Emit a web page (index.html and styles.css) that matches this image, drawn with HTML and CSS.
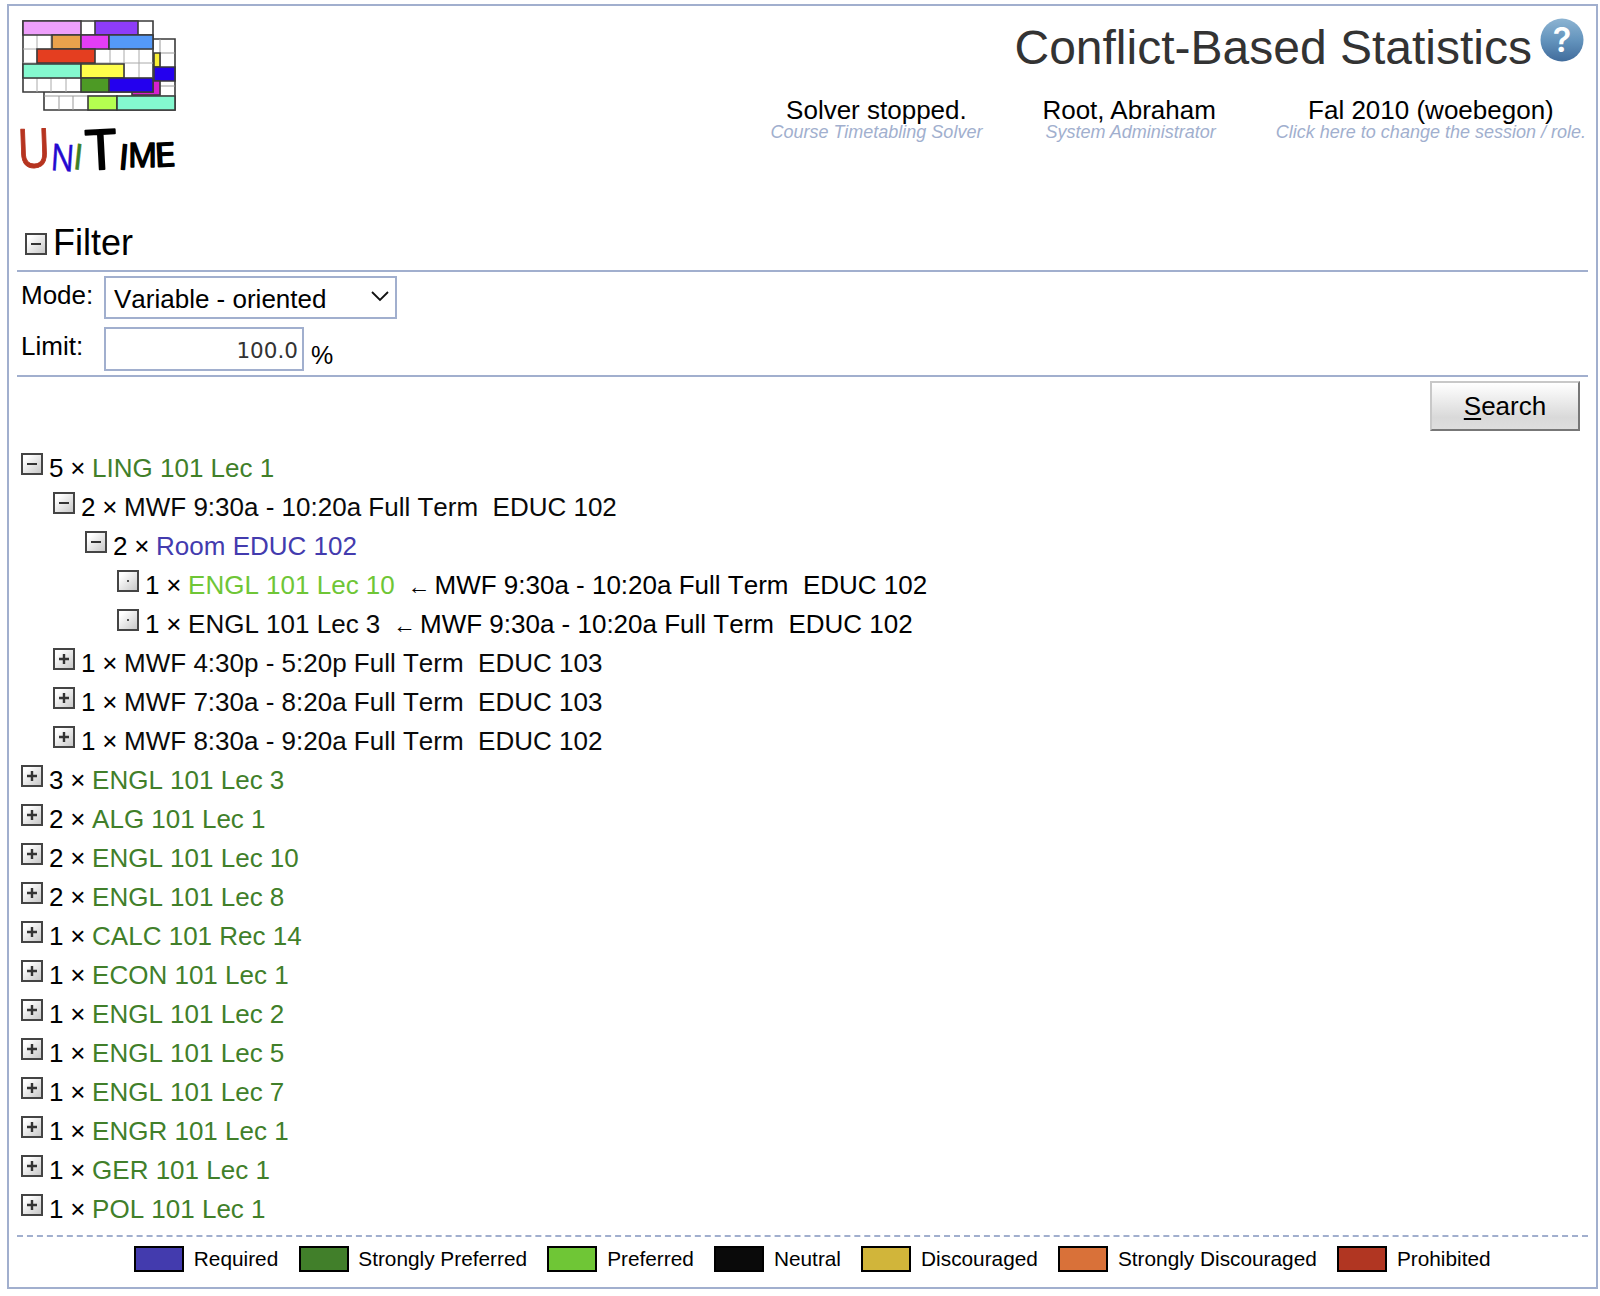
FILE: index.html
```html
<!DOCTYPE html>
<html lang="en">
<head>
<meta charset="utf-8">
<title>Conflict-Based Statistics</title>
<link rel="stylesheet" href="styles.css">
<script src="page.js" defer></script>
</head>
<body>
<svg width="0" height="0" class="defs" aria-hidden="true">
  <defs>
    <linearGradient id="box" x1="0" y1="0" x2="1" y2="1"><stop offset="0.2" stop-color="#fff"/><stop offset="1" stop-color="#c4c4c4"/></linearGradient>
    <linearGradient id="ball" x1="0" y1="0" x2="0" y2="1"><stop offset="0" stop-color="#8db4d2"/><stop offset="0.5" stop-color="#6494bd"/><stop offset="1" stop-color="#416c9c"/></linearGradient>
    <symbol id="frame" viewBox="0 0 22 22"><rect x="1" y="1" width="20" height="20" fill="url(#box)" stroke="#444" stroke-width="2"/></symbol>
    <symbol id="minus" viewBox="0 0 22 22"><use href="#frame"/><path d="M6 11h10" stroke="#333" stroke-width="2"/></symbol>
    <symbol id="plus" viewBox="0 0 22 22"><use href="#frame"/><path d="M6 11h10M11 6v10" stroke="#333" stroke-width="2.4"/></symbol>
    <symbol id="dot" viewBox="0 0 22 22"><use href="#frame"/><path d="M10 11h2" stroke="#555" stroke-width="2"/></symbol>
  </defs>
</svg>
<div class="page">
  <header class="header">
    <svg class="logo" viewBox="0 0 170 180" width="170" height="180">
      <g class="grid" transform="translate(1 1)">
        <path d="M23 20h131v71H23z" fill="#fff"/>
        <path d="M139 20v56M139 34h15M139 67h15M23 77h131M38 77v14M52 77v14" stroke="#999" stroke-width="1"/>
        <path d="M133 34h6v14h-6z" fill="#f8ee36"/><path d="M133 48h21v14h-21z" fill="#2400ee"/>
        <path d="M111 62h28v14h-28z" fill="#d820d0"/>
        <path d="M67 77h29v14H67z" fill="#b5ff50"/><path d="M96 77h58v14H96z" fill="#84f9cf"/>
        <path d="M2 2h130v71H2z" fill="#fff"/>
        <path d="M2 30h130M2 44h130M2 59h130M16 16v14M30 16v14M16 30v15M16 59v14M30 59v14M45 59v14M89 30v15M103 30v29M118 30v29" stroke="#aaa" stroke-width="1"/>
        <path d="M2 2h58v14H2z" fill="#ee9ffb"/><path d="M74 2h43v14H74z" fill="#8e3cf8"/><path d="M60 16h14M117 16h15"/>
        <path d="M31 16h29v14H31z" fill="#eaa24c"/><path d="M60 16h28v14H60z" fill="#e43df6"/><path d="M88 16h44v14H88z" fill="#5499f8"/>
        <path d="M16 30h58v14H16z" fill="#e43e20"/>
        <path d="M2 45h58v14H2z" fill="#84f9cf"/><path d="M60 45h43v14H60z" fill="#ffff4b"/>
        <path d="M60 59h28v14H60z" fill="#4d9a25"/><path d="M88 59h44v14H88z" fill="#2400ee"/>
      </g>
      <g class="wordmark">
        <text class="red" transform="translate(-2 150) rotate(-2) scale(.84 1)" font-size="54">U</text>
        <text class="blue" transform="translate(30 152) rotate(4) scale(.84 1)" font-size="37">N</text>
        <text class="green" transform="translate(52 151) rotate(6)" font-size="36">I</text>
        <text class="thick" transform="translate(67 152) rotate(-3)" font-size="55">T</text>
        <text transform="translate(98 151) rotate(5)" font-size="35">I</text>
        <text transform="translate(108 149) scale(.98 1)" font-size="33">M</text>
        <text transform="translate(135 149) rotate(-3) scale(1.15 1)" font-size="33">E</text>
      </g>
    </svg>
    <div class="heading">
      <div class="title"><h1>Conflict-Based Statistics</h1>
        <svg class="help" viewBox="0 0 44 44" width="44" height="44"><circle cx="22" cy="22" r="21.5" fill="url(#ball)"/><text x="22" y="34" text-anchor="middle">?</text></svg>
      </div>
      <div class="status">
        <div class="info solver"><span>Solver stopped.</span><em>Course Timetabling Solver</em></div>
        <div class="info user"><span>Root, Abraham</span><em>System Administrator</em></div>
        <div class="info session"><span>Fal 2010 (woebegon)</span><em>Click here to change the session / role.</em></div>
      </div>
    </div>
  </header>
  <section class="filter">
    <h2><svg class="toggle"><use href="#minus"/></svg>Filter</h2>
    <div class="fields">
      <label class="mode-label">Mode:</label>
      <div class="select">Variable - oriented<svg width="18" height="11" viewBox="0 0 18 11"><path d="M1 1l8 8 8-8" fill="none" stroke="#111" stroke-width="1.8"/></svg></div>
      <label class="limit-label">Limit:</label>
      <div class="limit"><div class="input">100.0</div><span>%</span></div>
    </div>
  </section>
  <div class="actions"><button class="search"><u>S</u>earch</button></div>
  <div class="tree" id="tree"></div>
  <footer class="legend">
    <span class="key"><i class="swatch required"></i>Required</span>
    <span class="key"><i class="swatch strongly-preferred"></i>Strongly Preferred</span>
    <span class="key"><i class="swatch preferred"></i>Preferred</span>
    <span class="key"><i class="swatch neutral"></i>Neutral</span>
    <span class="key"><i class="swatch discouraged"></i>Discouraged</span>
    <span class="key"><i class="swatch strongly-discouraged"></i>Strongly Discouraged</span>
    <span class="key"><i class="swatch prohibited"></i>Prohibited</span>
  </footer>
</div>
</body>
</html>
```
FILE: styles.css
```css
* { box-sizing: border-box; }
body {
  margin: 0;
  padding: 4px 2px 7px 7px;
  background: #fff;
  color: #000;
  font: 26px/30px "Liberation Sans", Arial, sans-serif;
}
.defs { position: absolute; }
.page {
  height: 1285px;
  padding: 0 8px;
  border: 2px solid #a1afce;
  display: flex;
  flex-direction: column;
}
.header { display: flex; justify-content: space-between; height: 212px; padding: 12px 0 0 3px; }
.logo { overflow: visible; }
.grid { fill: none; stroke: #3a3a3a; stroke-width: 1.6; }
.wordmark { font-family: "Open Sans", sans-serif; stroke-linejoin: round; fill: #000; stroke: #000; stroke-width: 1.6; }
.wordmark .red { fill: #b63420; stroke: #b63420; stroke-width: 1; }
.wordmark .blue { fill: #2409d0; stroke: #2409d0; stroke-width: .5; }
.wordmark .green { fill: #3d8126; stroke: #3d8126; stroke-width: .5; }
.wordmark .thick { stroke-width: 2; }
.heading { display: flex; flex-direction: column; align-items: flex-end; }
.title { display: flex; align-items: flex-start; gap: 8px; padding-right: 4px; }
h1 { margin: 2px 0 0; font-size: 48px; line-height: 56px; font-weight: 400; color: #333; }
.help text { font: 600 34px Inter, sans-serif; fill: #fff; }
.status { display: flex; gap: 60px; margin: 21px 2px 0 0; }
.info { display: flex; flex-direction: column; align-items: center; line-height: 26px; }
.info.user { align-items: flex-end; }
.info em { font-size: 18px; line-height: 18px; color: #a1afce; }
.toggle { width: 22px; height: 22px; flex: none; }
h2 {
  display: flex;
  align-items: center;
  gap: 6px;
  height: 54px;
  margin: 0;
  padding: 0 0 3px 8px;
  border-bottom: 2px solid #a1afce;
  font-size: 36px;
  font-weight: 400;
}
h2 .toggle { margin-top: 2px; }
.fields {
  display: grid;
  grid-template-columns: 83px 1fr;
  grid-template-rows: 43px 44px;
  row-gap: 8px;
  height: 105px;
  padding: 4px 4px 0;
  border-bottom: 2px solid #a1afce;
}
.fields label { padding-top: 4px; }
.select {
  display: flex;
  align-items: center;
  justify-content: space-between;
  width: 293px;
  padding: 3px 6px 0 8px;
  border: 2px solid #a1afce;
  font-kerning: none;
}
.select svg { margin-bottom: 5px; }
.limit { display: flex; gap: 7px; }
.input {
  width: 200px;
  padding: 7px 4px 5px;
  border: 2px solid #a1afce;
  color: #333;
  font: 21.5px/30px "DejaVu Sans", Verdana, sans-serif;
  text-align: right;
}
.limit span { padding-top: 13px; font-size: 25px; }
.actions { display: flex; justify-content: flex-end; padding: 4px 8px 0 0; }
.search {
  width: 150px;
  height: 50px;
  padding: 0;
  border: 2px solid;
  border-color: #c8c8c8 #777 #777 #c8c8c8;
  background: linear-gradient(#fff, #d9d9d9 75%, #dedede);
  font: inherit;
  color: #000;
}
.search u { text-underline-offset: 3px; text-decoration-thickness: 2px; }
.tree { margin-top: 17px; padding-left: 4px; height: 787px; font-kerning: none; }
.node { display: flex; align-items: flex-start; height: 39px; gap: 6px; padding-top: 5px; white-space: pre; }
.label { line-height: 30px; }
.count { letter-spacing: -.25px; }
.arrow { display: inline-block; width: 18px; text-indent: -2px; font-size: 23px; line-height: 26px; }
.level-1 { padding-left: 32px; }
.level-2 { padding-left: 64px; }
.level-3 { padding-left: 96px; }
.text-required { color: #433bae; }
.text-strong { color: #417f2a; }
.text-preferred { color: #6fc636; }
.text-neutral { color: #0a0a0a; }
.legend {
  display: flex;
  gap: 20.3px;
  padding: 9px 0 0 117px;
  border-top: 2px dashed #a1afce;
  font-size: 20.8px;
  line-height: 26px;
  white-space: nowrap;
}
.key { display: flex; gap: 9.8px; }
.swatch { width: 50px; height: 26px; border: 2px solid #000; }
.required { background: #433bae; }
.strongly-preferred { background: #417f2a; }
.preferred { background: #6fc636; }
.neutral { background: #0a0a0a; }
.discouraged { background: #d1b53a; }
.strongly-discouraged { background: #d97139; }
.prohibited { background: #b13622; }
```
FILE: page.js
```js
// level, toggle icon, count, colour class, label, trailing assignment
const nodes = [
  [0, "minus", 5, "strong", "LING 101 Lec 1"],
  [1, "minus", 2, "neutral", "MWF 9:30a - 10:20a Full Term  EDUC 102"],
  [2, "minus", 2, "required", "Room EDUC 102"],
  [3, "dot", 1, "preferred", "ENGL 101 Lec 10", "MWF 9:30a - 10:20a Full Term  EDUC 102"],
  [3, "dot", 1, "neutral", "ENGL 101 Lec 3", "MWF 9:30a - 10:20a Full Term  EDUC 102"],
  [1, "plus", 1, "neutral", "MWF 4:30p - 5:20p Full Term  EDUC 103"],
  [1, "plus", 1, "neutral", "MWF 7:30a - 8:20a Full Term  EDUC 103"],
  [1, "plus", 1, "neutral", "MWF 8:30a - 9:20a Full Term  EDUC 102"],
  [0, "plus", 3, "strong", "ENGL 101 Lec 3"],
  [0, "plus", 2, "strong", "ALG 101 Lec 1"],
  [0, "plus", 2, "strong", "ENGL 101 Lec 10"],
  [0, "plus", 2, "strong", "ENGL 101 Lec 8"],
  [0, "plus", 1, "strong", "CALC 101 Rec 14"],
  [0, "plus", 1, "strong", "ECON 101 Lec 1"],
  [0, "plus", 1, "strong", "ENGL 101 Lec 2"],
  [0, "plus", 1, "strong", "ENGL 101 Lec 5"],
  [0, "plus", 1, "strong", "ENGL 101 Lec 7"],
  [0, "plus", 1, "strong", "ENGR 101 Lec 1"],
  [0, "plus", 1, "strong", "GER 101 Lec 1"],
  [0, "plus", 1, "strong", "POL 101 Lec 1"]
];
document.getElementById("tree").innerHTML = nodes.map(([level, icon, count, tone, label, from]) =>
  `<div class="node level-${level}"><svg class="toggle"><use href="#${icon}"/></svg>` +
  `<span class="label"><span class="count">${count} × </span><span class="text-${tone}">${label}</span>` +
  (from ? `<span class="from">  <span class="arrow">←</span> ${from}</span>` : "") +
  `</span></div>`).join("");
```
